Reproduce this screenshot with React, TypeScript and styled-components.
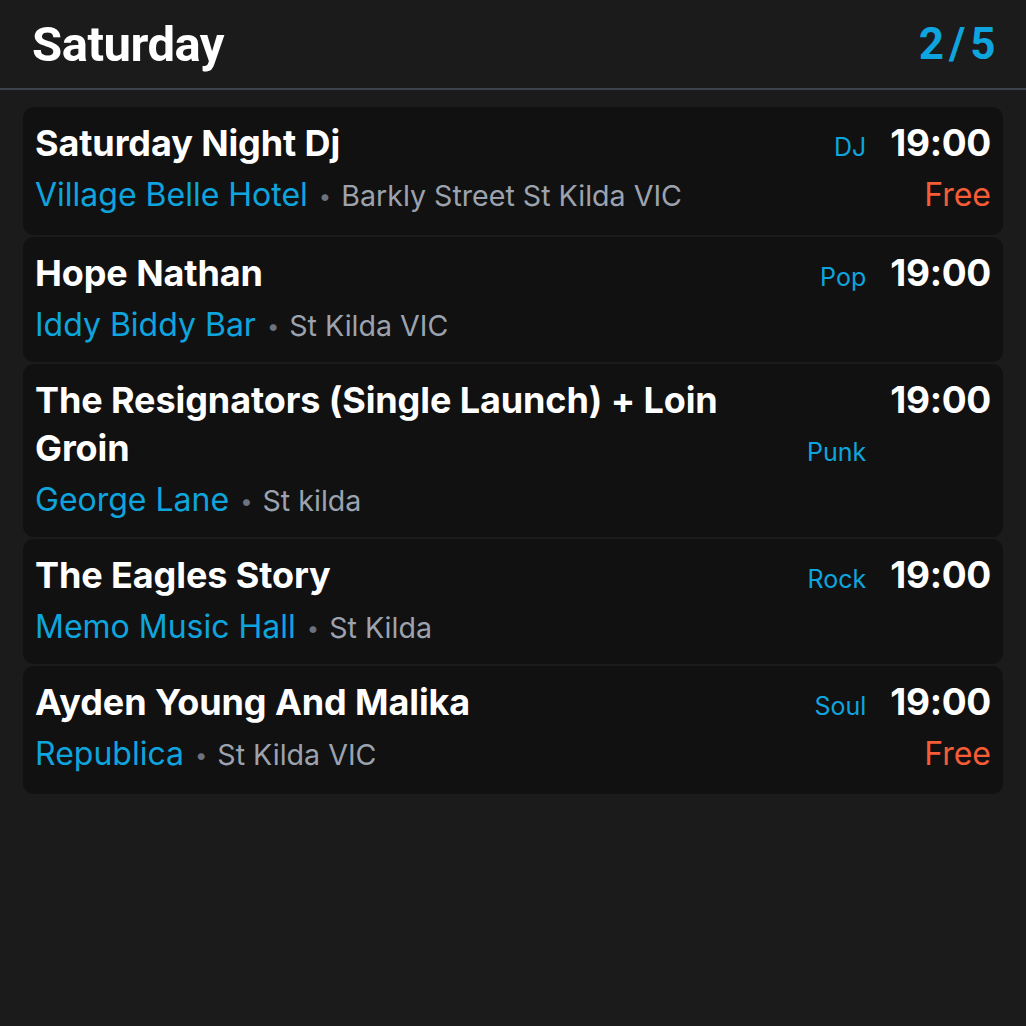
import React from "react";
import styled, { createGlobalStyle } from "styled-components";

const Global = createGlobalStyle`
  html, body { margin: 0; padding: 0; background: #1b1b1b; }
  body { font-family: Inter, "Noto Sans", sans-serif; -webkit-font-smoothing: antialiased; }
`;

const Page = styled.div`
  width: 1026px;
  min-height: 1026px;
  background: #1b1b1b;
  display: flex;
  flex-direction: column;
`;

const Header = styled.header`
  height: 90px;
  box-sizing: border-box;
  display: flex;
  align-items: center;
  justify-content: space-between;
  padding: 0 31px 0 32px;
  border-bottom: 2px solid #3d424c;
`;

const DayTitle = styled.h1`
  margin: 0;
  font-family: Roboto, "Liberation Sans", sans-serif;
  font-weight: 700;
  font-size: 49px;
  color: #ffffff;
  letter-spacing: -0.5px;
`;

const Pager = styled.span`
  font-family: Roboto, "Liberation Sans", sans-serif;
  font-weight: 700;
  font-size: 44px;
  color: #0ea5de;
  letter-spacing: -0.5px;
  word-spacing: -5px;
`;

const List = styled.div`
  display: flex;
  flex-direction: column;
  gap: 2px;
  padding: 17px 23px 0 23px;
`;

const Card = styled.div`
  display: flex;
  gap: 24px;
  background: #111111;
  border-radius: 11px;
  padding: 12px;
`;

const Main = styled.div`
  flex: 1;
  min-width: 0;
  display: flex;
  flex-direction: column;
`;

const TitleRow = styled.div`
  display: flex;
  align-items: last baseline;
  justify-content: space-between;
  gap: 16px;
`;

const Title = styled.div`
  font-weight: 700;
  font-size: 36px;
  line-height: 48px;
  color: #ffffff;
  letter-spacing: -0.1px;
`;

const Genre = styled.div`
  font-size: 25px;
  line-height: 30px;
  color: #0ea5de;
  white-space: nowrap;
`;

const VenueRow = styled.div`
  font-size: 32px;
  line-height: 48px;
  padding-top: 4px;
  white-space: nowrap;
`;

const Venue = styled.span`
  color: #0ea5de;
`;

const Dot = styled.span`
  color: #6b7280;
  font-size: 22px;
  margin: 0 10px 0 11px;
  vertical-align: 2px;
`;

const Address = styled.span`
  color: #9ca3af;
  font-size: 28.6px;
`;

const Side = styled.div`
  display: flex;
  flex-direction: column;
  align-items: flex-end;
`;

const Time = styled.div`
  font-weight: 700;
  font-size: 37px;
  line-height: 48px;
  color: #ffffff;
  letter-spacing: -0.3px;
`;

const Price = styled.div`
  font-size: 32px;
  line-height: 56px;
  color: #f65c36;
`;

type Ev = { title: string; genre: string; venue: string; addr: string; time: string; free?: boolean };

const events: Ev[] = [
  { title: "Saturday Night Dj", genre: "DJ", venue: "Village Belle Hotel", addr: "Barkly Street St Kilda VIC", time: "19:00", free: true },
  { title: "Hope Nathan", genre: "Pop", venue: "Iddy Biddy Bar", addr: "St Kilda VIC", time: "19:00" },
  { title: "The Resignators (Single Launch) + Loin Groin", genre: "Punk", venue: "George Lane", addr: "St kilda", time: "19:00" },
  { title: "The Eagles Story", genre: "Rock", venue: "Memo Music Hall", addr: "St Kilda", time: "19:00" },
  { title: "Ayden Young And Malika", genre: "Soul", venue: "Republica", addr: "St Kilda VIC", time: "19:00", free: true },
];

export default function App() {
  return (
    <Page>
      <Global />
      <Header>
        <DayTitle>Saturday</DayTitle>
        <Pager>2 / 5</Pager>
      </Header>
      <List>
        {events.map((e, i) => (
          <Card key={i}>
            <Main>
              <TitleRow>
                <Title>{e.title}</Title>
                <Genre>{e.genre}</Genre>
              </TitleRow>
              <VenueRow>
                <Venue>{e.venue}</Venue>
                <Dot>•</Dot>
                <Address>{e.addr}</Address>
              </VenueRow>
            </Main>
            <Side>
              <Time>{e.time}</Time>
              {e.free && <Price>Free</Price>}
            </Side>
          </Card>
        ))}
      </List>
    </Page>
  );
}
